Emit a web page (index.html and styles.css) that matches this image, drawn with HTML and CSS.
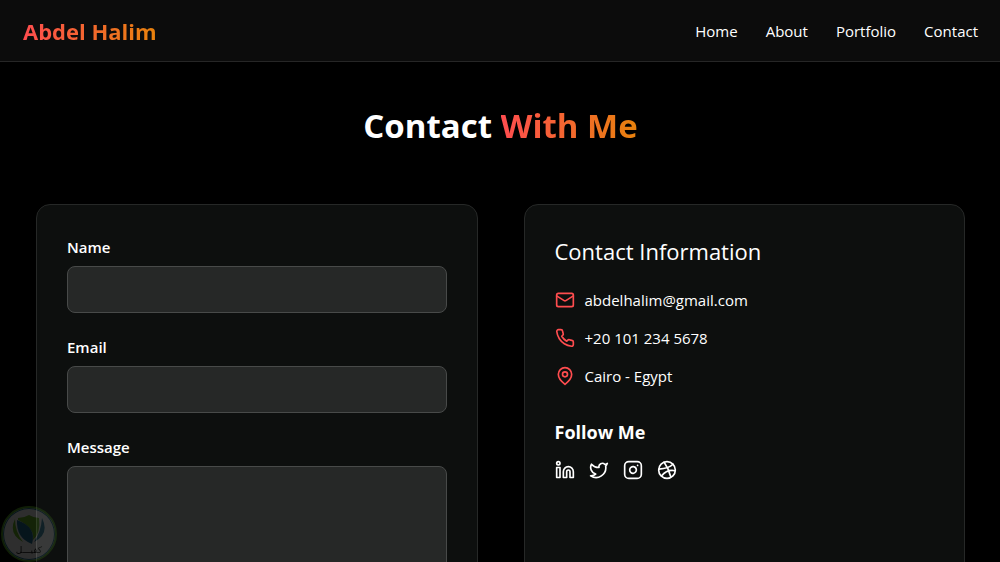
FILE: index.html
```html
<!DOCTYPE html>
<html lang="en">
<head>
<meta charset="utf-8">
<meta name="viewport" content="width=device-width, initial-scale=1">
<title>Abdel Halim</title>
<link rel="stylesheet" href="styles.css">
</head>
<body>
<header class="navbar">
  <a class="logo accent" href="#">Abdel Halim</a>
  <nav class="menu">
    <a href="#">Home</a>
    <a href="#">About</a>
    <a href="#">Portfolio</a>
    <a href="#">Contact</a>
  </nav>
</header>
<main class="page">
  <h1 class="title">Contact <span class="accent">With Me</span></h1>
  <div class="columns">
    <form class="card form">
      <div class="field"><label for="name">Name</label><input id="name" type="text"></div>
      <div class="field"><label for="email">Email</label><input id="email" type="email"></div>
      <div class="field"><label for="message">Message</label><textarea id="message" rows="6"></textarea></div>
    </form>
    <section class="card">
      <h2 class="info-title">Contact Information</h2>
      <ul class="info">
        <li><svg class="icon" viewBox="0 0 24 24"><rect x="2" y="4" width="20" height="16" rx="2"/><path d="m22 7-8.97 5.7a1.94 1.94 0 0 1-2.06 0L2 7"/></svg><span>abdelhalim@gmail.com</span></li>
        <li><svg class="icon" viewBox="0 0 24 24"><path d="M22 16.92v3a2 2 0 0 1-2.18 2 19.79 19.79 0 0 1-8.63-3.07 19.5 19.5 0 0 1-6-6 19.79 19.79 0 0 1-3.07-8.67A2 2 0 0 1 4.11 2h3a2 2 0 0 1 2 1.72 12.84 12.84 0 0 0 .7 2.81 2 2 0 0 1-.45 2.11L8.09 9.91a16 16 0 0 0 6 6l1.27-1.27a2 2 0 0 1 2.11-.45 12.84 12.84 0 0 0 2.81.7A2 2 0 0 1 22 16.92z"/></svg><span>+20 101 234 5678</span></li>
        <li><svg class="icon" viewBox="0 0 24 24"><path d="M20 10c0 6-8 12-8 12s-8-6-8-12a8 8 0 0 1 16 0Z"/><circle cx="12" cy="10" r="3"/></svg><span>Cairo - Egypt</span></li>
      </ul>
      <h3 class="follow">Follow Me</h3>
      <div class="social">
        <a href="#" aria-label="LinkedIn"><svg class="icon" viewBox="0 0 24 24"><path d="M16 8a6 6 0 0 1 6 6v7h-4v-7a2 2 0 0 0-4 0v7h-4v-7a6 6 0 0 1 6-6z"/><path d="M2 9h4v12H2z"/><circle cx="4" cy="4" r="2"/></svg></a>
        <a href="#" aria-label="Twitter"><svg class="icon" viewBox="0 0 24 24"><path d="M22 4s-.7 2.1-2 3.4c1.6 10-9.4 17.3-18 11.6 2.2.1 4.4-.6 6-2C3 15.5.5 9.6 3 5c2.2 2.6 5.6 4.1 9 4-.9-4.2 4-6.6 7-3.8 1.1 0 3-1.2 3-1.2z"/></svg></a>
        <a href="#" aria-label="Instagram"><svg class="icon" viewBox="0 0 24 24"><rect x="2" y="2" width="20" height="20" rx="5"/><path d="M16 11.37A4 4 0 1 1 12.63 8 4 4 0 0 1 16 11.37z"/><path d="M17.5 6.5h.01"/></svg></a>
        <a href="#" aria-label="Dribbble"><svg class="icon" viewBox="0 0 24 24"><circle cx="12" cy="12" r="10"/><path d="M19.13 5.09C15.22 9.14 10 10.44 2.25 10.94"/><path d="M21.75 12.84c-6.62-1.41-12.14 1-16.38 6.32"/><path d="M8.56 2.75c4.37 6 6 9.42 8 17.72"/></svg></a>
      </div>
    </section>
  </div>
</main>
<div class="watermark">
  <svg class="shield" viewBox="0 0 36 30">
    <path fill="#4f8a1c" d="M7 3Q13 3 18 0Q23 3 28 3Q30 18 22 25Q24 13 7 5Z"/>
    <path fill="#1b5570" d="M6 5Q26 12 21 29Q5 23 6 5Z"/>
    <path fill="#1b5570" d="M31 3Q39 19 23 27Q30 17 31 3Z"/>
    <path fill="#4f8a1c" d="M4 4Q-3 19 12 27Q4 17 4 4Z"/>
  </svg>
  <span lang="ar">كفيـــل</span>
</div>
</body>
</html>
```
FILE: styles.css
```css
* { box-sizing: border-box; }
body {
  margin: 0;
  height: 100vh;
  overflow: hidden;
  background: #000;
  color: #fff;
  font: 15px/20px "Open Sans", "Noto Sans", sans-serif;
}
h1, h2, h3, ul { margin: 0; padding: 0; }
a { color: inherit; text-decoration: none; }
.navbar {
  display: flex;
  align-items: center;
  justify-content: space-between;
  height: 62px;
  padding: 0 22px 0 23px;
  background: #0c0c0c;
  border-bottom: 1px solid #262626;
}
.accent {
  background: linear-gradient(to right, #ff4d4f, #e8820c);
  background-clip: text;
  -webkit-background-clip: text;
  color: transparent;
}
.logo { font-size: 22px; line-height: 30px; font-weight: 700; }
.menu { display: flex; gap: 28px; }
.page { padding: 40px 35px 0 36px; }
.title {
  margin-bottom: 54px;
  text-align: center;
  font-size: 33px;
  line-height: 48px;
  font-weight: 700;
}
.columns {
  display: grid;
  grid-template-columns: 1fr 1fr;
  gap: 46px;
}
.card {
  padding: 31px 30px;
  background: #0d0f0e;
  border: 1px solid #262827;
  border-radius: 14px;
}
.form { display: grid; gap: 24px; padding-top: 32px; }
.field { display: grid; gap: 9px; }
.field label { font-weight: 600; }
.field input, .field textarea {
  width: 100%;
  height: 47px;
  padding: 10px;
  background: #262827;
  border: 1px solid #484a49;
  border-radius: 8px;
  color: #fff;
  font: inherit;
  resize: none;
}
.field textarea { height: 144px; }
.info-title { font-size: 22px; line-height: 30px; font-weight: 400; }
.info {
  display: grid;
  gap: 18px;
  margin-top: 24px;
  list-style: none;
}
.info li { display: flex; align-items: center; gap: 10px; }
.info .icon { color: #ff4d4f; }
.icon {
  display: block;
  width: 20px;
  height: 20px;
  fill: none;
  stroke: currentColor;
  stroke-width: 2;
  stroke-linecap: round;
  stroke-linejoin: round;
}
.follow { margin-top: 34px; font-size: 18px; line-height: 24px; font-weight: 700; }
.social { display: flex; gap: 14px; margin-top: 16px; }
.watermark {
  position: absolute;
  left: 1px;
  bottom: 0;
  display: flex;
  flex-direction: column;
  align-items: center;
  width: 56px;
  height: 56px;
  padding-top: 7px;
  background: #b8b8b8;
  border: 2px solid #3f7a1c;
  border-radius: 50%;
  box-shadow: inset 0 0 0 1px #1b5570;
  opacity: 0.25;
}
.watermark span { color: #111; font: 9px/10px "DejaVu Sans", sans-serif; }
.shield { width: 36px; height: 30px; }
```
